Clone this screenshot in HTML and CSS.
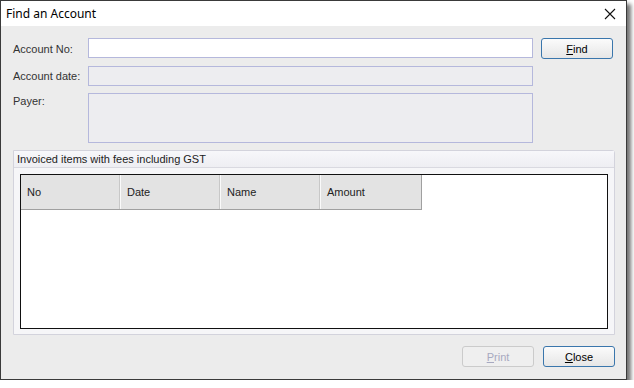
FILE: index.html
```html
<!DOCTYPE html>
<html lang="en">
<head>
  <meta charset="UTF-8">
  <title>Find an Account</title>
  <link rel="stylesheet" href="styles.css">
</head>
<body>
  <div class="window">
    <div class="titlebar">
      <span class="title">Find an Account</span>
      <svg class="close-x" width="12" height="12" viewBox="0 0 12 12">
        <path d="M1 1 L11 11 M11 1 L1 11" stroke="#111" stroke-width="1.1" fill="none"/>
      </svg>
    </div>
    <div class="content">
      <div class="form">
        <label class="lbl">Account No:</label>
        <input class="field" type="text">
        <button class="btn"><u>F</u>ind</button>

        <label class="lbl">Account date:</label>
        <div class="field field-off"></div>
        <div></div>

        <label class="lbl lbl-top">Payer:</label>
        <div class="field field-off payer"></div>
        <div></div>
      </div>

      <div class="group">
        <div class="group-head">Invoiced items with fees including GST</div>
        <div class="group-body">
          <div class="list">
            <div class="list-head">
              <div class="col">No</div>
              <div class="col">Date</div>
              <div class="col">Name</div>
              <div class="col">Amount</div>
            </div>
          </div>
        </div>
      </div>

      <div class="actions">
        <button class="btn btn-off"><u>P</u>rint</button>
        <button class="btn"><u>C</u>lose</button>
      </div>
    </div>
  </div>
</body>
</html>
```

FILE: styles.css
```css
body {
  margin: 0;
  padding: 0;
  background: #fff;
  font-family: Tahoma, "Liberation Sans", Arial, sans-serif;
  font-size: 11px;
  color: #1a1a1a;
}
.window {
  width: 625px;
  height: 378px;
  border: 1px solid #3a3a3a;
  background: #ececec;
  box-shadow: 4px 4px 4px rgba(0, 0, 0, 0.55);
  display: flex;
  flex-direction: column;
}
.titlebar {
  height: 25px;
  background: #fff;
  display: flex;
  align-items: center;
  justify-content: space-between;
  padding: 0 10px 0 5px;
}
.title {
  font-family: "Noto Sans", "Open Sans", sans-serif;
  font-size: 12px;
  color: #000;
}
.content {
  flex: 1;
  padding: 12px 11px 0 12px;
  display: flex;
  flex-direction: column;
}
.form {
  display: grid;
  grid-template-columns: 67px 445px 72px;
  column-gap: 8px;
  row-gap: 7px;
}
.lbl {
  align-self: center;
  white-space: nowrap;
  color: #333;
}
.lbl-top {
  align-self: start;
  padding-top: 2px;
}
.field {
  box-sizing: border-box;
  height: 20px;
  border: 1px solid #b5b8dc;
  background: #fff;
  margin: 0;
  padding: 0 3px;
  font: inherit;
}
.field-off {
  background: #ededf0;
}
.payer {
  height: 50px;
}
.btn {
  box-sizing: border-box;
  width: 72px;
  height: 21px;
  border: 1px solid #3a76ac;
  border-radius: 3px;
  background: linear-gradient(#fbfbfb, #e6e6e6);
  font-family: Tahoma, "Liberation Sans", Arial, sans-serif;
  font-size: 11px;
  color: #000;
  padding: 0;
}
.btn-off {
  border-color: #cbcbcb;
  background: #efefef;
  color: #a7a9c0;
}
.group {
  margin-top: 7px;
  width: 600px;
  height: 183px;
  border: 1px solid #d3d3dc;
  border-radius: 0 3px 0 0;
  background: #f6f6f8;
  display: flex;
  flex-direction: column;
}
.group-head {
  height: 16px;
  line-height: 16px;
  padding-left: 3px;
  background: linear-gradient(#f7f7fa, #eeeef2);
  border-bottom: 1px solid #d9d9e0;
  color: #222;
}
.group-body {
  flex: 1;
  padding: 6px 6px 5px 6px;
  display: flex;
}
.list {
  flex: 1;
  border: 1px solid #111;
  background: #fff;
}
.list-head {
  display: flex;
  width: 400px;
  height: 34px;
  background: #e3e3e3;
  border-bottom: 1px solid #a0a0a0;
  border-right: 1px solid #a0a0a0;
}
.col {
  box-sizing: border-box;
  width: 100px;
  padding-left: 6px;
  line-height: 34px;
  border-right: 1px solid #fafafa;
  box-shadow: inset -1px 0 0 #c8c8c8;
  color: #222;
}
.col:last-child {
  border-right: none;
  box-shadow: none;
}
.actions {
  margin-top: 11px;
  display: flex;
  justify-content: flex-end;
  gap: 9px;
}
```
